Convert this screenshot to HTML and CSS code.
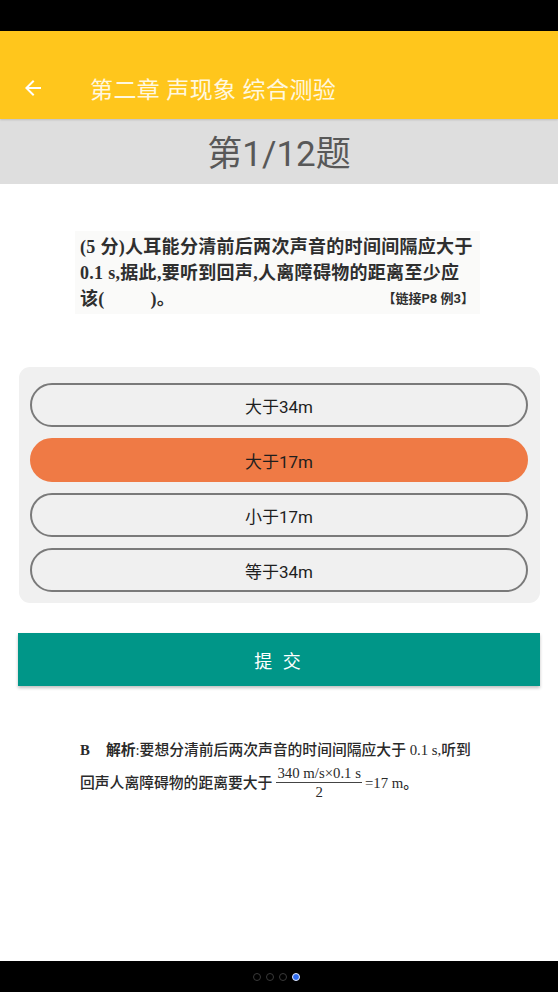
FILE: index.html
```html
<!DOCTYPE html>
<html lang="zh-CN">
<head>
<meta charset="utf-8">
<title>第二章 声现象 综合测验</title>
<link rel="stylesheet" href="styles.css">
</head>
<body>
<div class="screen">
  <div class="statusbar"></div>
  <header class="appbar">
    <svg class="back" viewBox="0 0 24 24" width="24" height="24"><path d="M20 11H7.83l5.59-5.59L12 4l-8 8 8 8 1.41-1.41L7.83 13H20v-2z" fill="#fff"/></svg>
    <span class="apptitle">第二章 声现象 综合测验</span>
  </header>
  <div class="counter">第1/12题</div>
  <main class="content">
    <div class="question">
      <p class="qline">(5 分)人耳能分清前后两次声音的时间间隔应大于</p>
      <p class="qline">0.1 s,据此,要听到回声,人离障碍物的距离至少应</p>
      <p class="qline qlast"><span>该(&emsp;&emsp;&ensp;)。</span><span class="link">【链接P8 例3】</span></p>
    </div>
    <div class="options">
      <div class="option">大于34m</div>
      <div class="option selected">大于17m</div>
      <div class="option">小于17m</div>
      <div class="option">等于34m</div>
    </div>
    <div class="submit">提 交</div>
    <div class="answer">
      <p class="aline"><b class="letter">B</b><b class="label">解析</b>:要想分清前后两次声音的时间间隔应大于 0.1 s,听到</p>
      <p class="aline">回声人离障碍物的距离要大于 <span class="frac"><span class="num">340 m/s×0.1 s</span><span class="den">2</span></span> =17 m。</p>
    </div>
  </main>
  <div class="navbar">
    <span class="dot"></span><span class="dot"></span><span class="dot"></span><span class="dot active"></span>
  </div>
</div>
</body>
</html>
```
FILE: styles.css
```css
html, body {
  margin: 0;
  padding: 0;
  background: #000;
}
.screen {
  width: 558px;
  height: 992px;
  display: flex;
  flex-direction: column;
  background: #fff;
  font-family: Roboto, "Noto Sans CJK SC", sans-serif;
}
.statusbar {
  height: 31px;
  background: #000;
  flex: none;
}
.appbar {
  height: 88px;
  flex: none;
  background: #ffc61c;
  display: flex;
  align-items: center;
  padding-top: 26px;
  box-sizing: border-box;
  position: relative;
  z-index: 2;
  box-shadow: 0 1px 2px rgba(0,0,0,0.15);
}
.back {
  margin-left: 21px;
  width: 24px;
  height: 24px;
}
.apptitle {
  margin-left: 45px;
  color: #fff8e0;
  font-size: 23px;
  letter-spacing: 0.4px;
}
.counter {
  height: 65px;
  flex: none;
  background: #dedede;
  color: #585858;
  font-size: 35px;
  display: flex;
  align-items: center;
  justify-content: center;
  padding-bottom: 2px;
  box-sizing: border-box;
}
.content {
  flex: 1;
  display: flex;
  flex-direction: column;
  align-items: flex-start;
}
.question {
  margin: 47px 0 0 75px;
  width: 405px;
  height: 83px;
  background: #fafaf9;
  padding: 3px 6px 0 5px;
  box-sizing: border-box;
  font-family: "Liberation Serif", "Noto Sans CJK SC", serif;
  color: #2f2f2f;
}
.qline {
  margin: 0;
  font-size: 18px;
  line-height: 26px;
  font-weight: 600;
  white-space: nowrap;
  letter-spacing: 0.3px;
}
.qlast {
  display: flex;
  justify-content: space-between;
}
.link {
  font-family: Roboto, "Noto Sans CJK SC", sans-serif;
  font-size: 13px;
  font-weight: 700;
  letter-spacing: 0;
}
.options {
  margin: 53px 0 0 19px;
  width: 521px;
  background: #f0f0f0;
  border-radius: 11px;
  padding: 16px 12px 11px 11px;
  box-sizing: border-box;
  display: flex;
  flex-direction: column;
  gap: 11px;
}
.option {
  height: 44px;
  border: 2px solid #7a7a7a;
  border-radius: 22px;
  box-sizing: border-box;
  display: flex;
  align-items: center;
  justify-content: center;
  font-size: 17px;
  color: #1e1e1e;
}
.option.selected {
  background: #ef7a45;
  border-color: #ef7a45;
}
.submit {
  margin: 30px 0 0 18px;
  width: 522px;
  height: 53px;
  background: #009688;
  color: #fff;
  font-size: 18px;
  letter-spacing: 3px;
  display: flex;
  align-items: center;
  justify-content: center;
  box-shadow: 0 2px 3px rgba(0,0,0,0.25);
}
.answer {
  margin: 53px 0 0 80px;
  font-family: "Liberation Serif", "Noto Sans CJK SC", serif;
  color: #2a2a2a;
}
.aline {
  margin: 0;
  font-size: 14.8px;
  line-height: 22px;
  white-space: nowrap;
  display: flex;
  align-items: center;
  font-weight: 500;
}
.aline + .aline {
  margin-top: 4px;
}
.letter {
  margin-right: 16px;
}
.label {
  font-weight: 700;
}
.frac {
  display: inline-flex;
  flex-direction: column;
  align-items: center;
  margin: 0 3px 0 4px;
  line-height: 17px;
}
.num {
  border-bottom: 1px solid #444;
  padding: 0 1px;
}
.den {
  line-height: 18px;
}
.navbar {
  height: 31px;
  flex: none;
  background: #000;
  display: flex;
  align-items: center;
  justify-content: center;
  gap: 5px;
  padding-right: 6px;
}
.dot {
  width: 6px;
  height: 6px;
  border: 1.5px solid #3a3a3a;
  border-radius: 50%;
}
.dot.active {
  background: #2f6cf0;
  border-color: #e8eeff;
}
```
